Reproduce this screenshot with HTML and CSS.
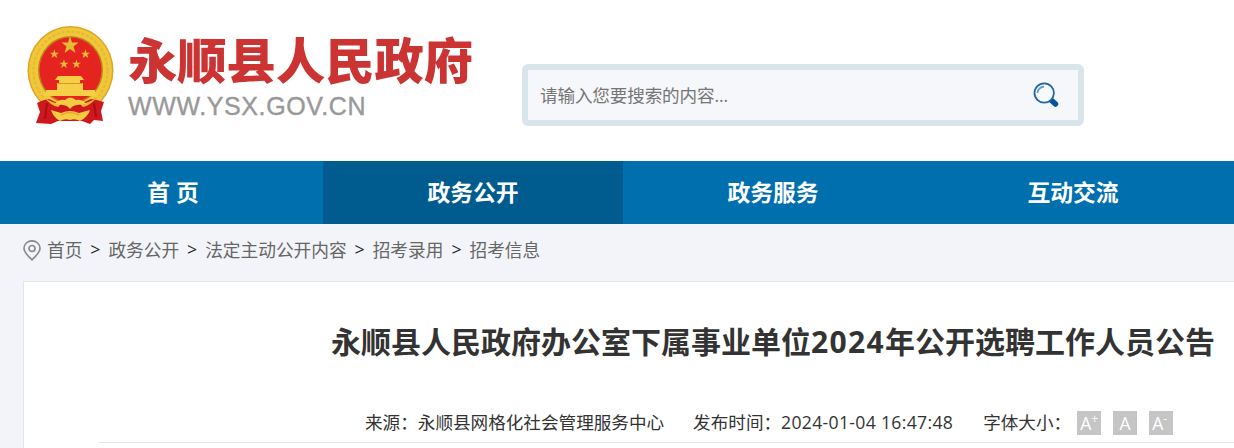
FILE: index.html
```html
<!DOCTYPE html>
<html lang="zh-CN">
<head>
    <meta charset="UTF-8">
    <link rel="stylesheet" href="styles.css">
    <title>永顺县人民政府</title>
</head>
<body>

<div class="header">
    <svg class="emblem" width="94" height="104" viewBox="0 0 94 104">
        <ellipse cx="48.500" cy="47.500" rx="43" ry="44.500" fill="#dda526"/>
        <ellipse cx="48.500" cy="47.500" rx="41.500" ry="43" fill="#f0c738"/>
        <ellipse cx="48.500" cy="47.500" rx="37" ry="39" fill="none" stroke="#e6b733" stroke-width="2" stroke-dasharray="3 2"/>
        <ellipse cx="48.500" cy="47" rx="32.500" ry="34" fill="#bd821d"/>
        <ellipse cx="48.500" cy="47" rx="31" ry="32.500" fill="#e6241f"/>
        <g fill="#e8bb35">
            <path id="star" d="M48 13 L50 19.500 L56.500 19.500 L51.500 23.500 L53.500 30 L48 26 L42.500 30 L44.500 23.500 L39.500 19.500 L46 19.500Z"/>
            <use href="#star" transform="translate(7.400 19.500) scale(.52)"/>
            <use href="#star" transform="translate(38.500 19.500) scale(.52)"/>
            <use href="#star" transform="translate(17 29.500) scale(.52)"/>
            <use href="#star" transform="translate(29.500 29.500) scale(.52)"/>
        </g>
        <path d="M36 53 H59 L62 57 H33Z M37 57 H58 V60 H37Z M35 60 H61 V67 H35Z M24 67 H73 V71 H77 L74 73 H23 L20 71 H24Z" fill="#f7cf46"/>
        <path d="M36 60.500 H60" stroke="#d99a22" stroke-width="1"/>
        <path d="M15 80 Q20 77 27 76 L38 81 L48 84 L58 81 L69 76 Q76 77 82 79 L79 88 L81 98 L72 97 L68 101 L60 98 L48 98 L36 98 L29 101 L14 100 L18 89Z" fill="#cf171e"/>
        <path d="M25 80 L23 96 M72 80 L74 94" stroke="#a90e18" stroke-width="2"/>
        <path d="M23 75 Q30 80 39 81 L36 84 Q28 82 23 75Z M74 75 Q67 80 58 81 L61 84 Q69 82 74 75Z" fill="#f0b82f"/>
        <path d="M33 81 Q37 76 43 77 Q48 72 54 77 Q60 76 64 81 L52 82 L48 86 L44 82Z" fill="#f5cb42"/>
        <path d="M29 87 L39 90 Q48 86 57 90 L68 87 Q66 94 58 98 Q53 95 48 97 Q43 95 38 98 Q31 94 29 87Z" fill="#f5cb42"/>
        <path d="M39 92 Q48 87 57 92" stroke="#e6a52b" stroke-width="1.500" fill="none"/>
    </svg>
    <div class="logo">
        <div class="logo-name">永顺县人民政府</div>
        <div class="logo-url">WWW.YSX.GOV.CN</div>
    </div>
    <div class="search">
        <input type="text" placeholder="请输入您要搜索的内容...">
        <svg width="28" height="28" viewBox="0 0 28 28">
            <path d="M19 19 L23.500 23" stroke="#07539a" stroke-width="5.500" stroke-linecap="round"/>
            <circle cx="12.200" cy="12" r="9.700" fill="#f7fafc" stroke="#1f66a6" stroke-width="1.800"/>
            <path d="M5.500 12 Q6 6.500 12 5.500" fill="none" stroke="#6a9cc8" stroke-width="1.800"/>
        </svg>
    </div>
</div>

<div class="nav">
    <ul>
        <li>首 页</li>
        <li class="active">政务公开</li>
        <li>政务服务</li>
        <li>互动交流</li>
    </ul>
</div>

<div class="crumbs">
    <svg width="18" height="21" viewBox="0 0 18 21">
        <path d="M9 19.800 Q1 12.500 1 8.300 A8 7.500 0 0 1 17 8.300 Q17 12.500 9 19.800Z" fill="none" stroke="#8c8c8c" stroke-width="1.700"/>
        <circle cx="9" cy="8.500" r="3" fill="none" stroke="#8c8c8c" stroke-width="1.700"/>
    </svg>
    <a>首页</a><i>&gt;</i><a>政务公开</a><i>&gt;</i><a>法定主动公开内容</a><i>&gt;</i><a>招考录用</a><i>&gt;</i><a>招考信息</a>
</div>

<div class="article">
    <h1>永顺县人民政府办公室下属事业单位<span>2024</span>年公开选聘工作人员公告</h1>
    <div class="info">
        <span class="source">来源：永顺县网格化社会管理服务中心</span>
        <span class="time">发布时间：<b>2024-01-04 16:47:48</b></span>
        <span class="size">字体大小：</span>
        <span class="btn">A<sup>+</sup></span>
        <span class="btn normal">A</span>
        <span class="btn">A<sup>-</sup></span>
    </div>
</div>

</body>
</html>
```

FILE: styles.css
```css
* {
    box-sizing: border-box;
}

body {
    margin: 0;
    height: 448px;
    overflow: hidden;
    background-color: #f3f4f9;
    font-family: "Open Sans", "Noto Sans CJK SC", sans-serif;
    font-size: 17.6px;
    color: #333;
}

.header {
    display: flex;
    align-items: flex-start;
    height: 161px;
    padding-left: 22px;
    background-color: #fff;
}

.emblem {
    margin-top: 23px;
}

.logo {
    width: 406px;
    padding-left: 12px;
    white-space: nowrap;
}

.logo-name {
    margin-top: 28px;
    line-height: 60px;
    font-family: "Noto Sans CJK SC", sans-serif;
    font-size: 49.3px;
    font-weight: 900;
    color: #cc3333;
}

.logo-url {
    margin-top: 3px;
    line-height: 30px;
    font-family: "Liberation Sans", Arial, sans-serif;
    font-size: 25px;
    letter-spacing: 0.6px;
    color: #999;
    -webkit-text-stroke: 0.4px #999;
}

.search {
    display: flex;
    align-items: center;
    width: 562px;
    height: 62px;
    margin-top: 64px;
    border: 6px solid #dae5eb;
    border-radius: 6px;
    background-color: #f5f7fa;
}

.search input {
    width: 504px;
    height: 50px;
    padding: 0 12px;
    border: none;
    background: none;
    font-family: "Open Sans", "Noto Sans CJK SC", sans-serif;
    font-size: 17.6px;
    letter-spacing: -0.15px;
}

.search input::placeholder {
    color: #757575;
}

.nav {
    height: 63px;
    padding-left: 23px;
    background-color: #006fae;
}

.nav ul {
    display: flex;
    width: 1500px;
    margin: 0;
    padding: 0;
    list-style: none;
}

.nav li {
    width: 300px;
    line-height: 63px;
    text-align: center;
    font-size: 22.8px;
    font-weight: bold;
    color: #fff;
}

.nav .active {
    background-color: #005c8f;
}

.crumbs {
    display: flex;
    align-items: center;
    height: 57px;
    padding: 0 0 7px 23px;
    font-size: 17.7px;
    color: #666;
    white-space: nowrap;
}

.crumbs svg {
    margin: 2px 6px 0 0;
}

.crumbs i {
    width: 26px;
    text-align: center;
    font-style: normal;
    color: #222;
}

.article {
    width: 1500px;
    height: 400px;
    margin-left: 23px;
    padding: 30px 75px 0;
    border: 1px solid #e3e4e6;
    background-color: #fff;
}

.article h1 {
    margin: 0;
    line-height: 60px;
    text-align: center;
    font-size: 30px;
    white-space: nowrap;
}

.article h1 span {
    letter-spacing: 1.3px;
}

.info {
    display: flex;
    align-items: center;
    height: 71px;
    padding: 31px 0 0 266px;
    border-bottom: 1px solid #e5e5e5;
    white-space: nowrap;
}

.info .source,
.info .time,
.info .size {
    margin-top: -2px;
}

.info b {
    font-weight: normal;
    letter-spacing: 0.32px;
}

.info .source {
    margin-right: 29px;
}

.info .time {
    margin-right: 30px;
}

.info .size {
    margin-right: 6px;
}

.btn {
    width: 24px;
    height: 24px;
    margin-right: 12px;
    padding-left: 3px;
    background-color: #c5c5c5;
    line-height: 25px;
    color: #fff;
}

.btn.normal {
    padding: 0;
    text-align: center;
}

.btn:last-child {
    margin-right: 0;
}

.btn sup {
    font-size: 12px;
    line-height: 0;
}
```
